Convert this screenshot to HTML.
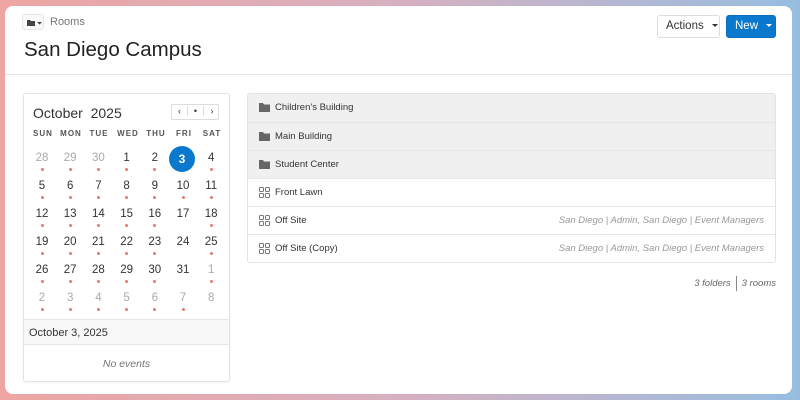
<!DOCTYPE html>
<html><head><style>
*{box-sizing:border-box;margin:0;padding:0}
body{width:800px;height:400px;overflow:hidden;background:linear-gradient(90deg,#eea5a3 0%,#d7b0c0 50%,#96bde0 100%);font-family:"Liberation Sans",sans-serif;color:#333;position:relative}
.panel{position:absolute;left:5px;top:6px;width:787px;height:388px;background:#fff;border-radius:8px;overflow:hidden}
.hdr{position:absolute;left:0;top:0;width:100%;height:69px;border-bottom:1px solid #e6e6e6}
.crumb{position:absolute;left:17px;top:8px;width:22px;height:16px;border:1px solid #e6e6e6;border-radius:3px;background:#f9f9f9}
.rooms{position:absolute;left:45px;top:10px;font-size:11px;color:#777}
h1{position:absolute;left:19px;top:32px;font-size:20.5px;font-weight:normal;color:#222}
.btn{position:absolute;top:9px;height:23px;border-radius:3px;font-size:11.5px;line-height:21px;padding-left:8px;white-space:nowrap}
.act{left:652px;width:63px;border:1px solid #ddd;color:#333}
.new{left:721px;width:50px;background:#0a78cc;color:#fff;border:1px solid #0a6fc0}
.caret{display:inline-block;width:0;height:0;border-left:3px solid transparent;border-right:3px solid transparent;border-top:3px solid currentColor;vertical-align:middle;margin-left:8px}
.cal{position:absolute;left:18px;top:87px;width:207px;height:289px;border:1px solid #e3e3e3;border-radius:3px;box-shadow:0 1px 2px rgba(0,0,0,.05)}
.mt{position:absolute;left:9px;top:11px;font-size:14px;color:#333}
.nav{position:absolute;left:147px;top:10px;width:48px;height:16px;border:1px solid #ddd;border-radius:2px;font-size:9px}
.nav span{position:absolute;top:1px;width:16px;text-align:center}
.dh{position:absolute;top:35px;font-size:8px;font-weight:bold;letter-spacing:1px;color:#555;width:30px;text-align:center}
.d{position:absolute;width:28px;text-align:center;font-size:11.5px;color:#333}
.d.o{color:#aaa}
.d i{position:absolute;left:12.5px;top:16px;width:3px;height:3px;border-radius:50%;background:#e07c74}
.sel{position:absolute;left:145px;top:52px;width:26px;height:26px;border-radius:50%;background:#0a78cc;color:#fff;font-weight:bold;font-size:12px;text-align:center;line-height:26px}
.sd{position:absolute;left:0;top:225px;width:100%;height:26px;background:#f8f8f8;border-top:1px solid #e6e6e6;border-bottom:1px solid #e6e6e6;font-size:11px;padding:7px 0 0 5px;color:#333}
.ne{position:absolute;top:264px;width:100%;text-align:center;font-size:10.5px;font-style:italic;color:#777}
.list{position:absolute;left:242px;top:87px;width:529px;border:1px solid #e3e3e3;border-radius:3px}
.row{height:28px;border-top:1px solid #e6e6e6;position:relative;font-size:9.5px;color:#333;line-height:27px;padding-left:27px}
.row:first-child{border-top:none}
.row.f{background:#f0f0f0}
.row .ic{position:absolute;left:11px;top:9px}
.row .r{position:absolute;right:11px;top:0;font-style:italic;color:#999;font-size:9.5px}
.foot{position:absolute;right:16px;top:270px;font-size:9.5px;font-style:italic;color:#666}
.foot b{display:inline-block;width:1px;height:15px;background:#888;vertical-align:middle;margin:0 5px}
</style></head><body>
<div class="panel">
<div class="hdr">
<div class="crumb"><svg width="22" height="16" style="position:absolute;left:-1px;top:-1px"><path d="M5 6h3l1 1h4v5H5z" fill="#444"/><path d="M15 8l2.5 2.5L20 8z" fill="#444"/></svg></div>
<div class="rooms">Rooms</div>
<h1>San Diego Campus</h1>
<div class="btn act">Actions<span class="caret"></span></div>
<div class="btn new">New<span class="caret"></span></div>
</div>
<div class="cal">
<div class="mt">October&nbsp; 2025</div>
<div class="nav"><span style="left:0;border-right:1px solid #ddd">&#8249;</span><span style="left:16px;border-right:1px solid #ddd">&bull;</span><span style="left:32px">&#8250;</span></div>
<div class="dh" style="left:4px">SUN</div><div class="dh" style="left:32px">MON</div><div class="dh" style="left:60px">TUE</div><div class="dh" style="left:89px">WED</div><div class="dh" style="left:117px">THU</div><div class="dh" style="left:145px">FRI</div><div class="dh" style="left:173px">SAT</div>
<div id="g"></div>
<div class="sel">3</div>
<div class="sd">October 3, 2025</div>
<div class="ne">No events</div>
</div>
<div class="list">
<div class="row f"><svg class="ic" width="11" height="9"><path d="M0 0h4l1 1.5h6V9H0z" fill="#666"/></svg>Children's Building</div>
<div class="row f"><svg class="ic" width="11" height="9"><path d="M0 0h4l1 1.5h6V9H0z" fill="#666"/></svg>Main Building</div>
<div class="row f"><svg class="ic" width="11" height="9"><path d="M0 0h4l1 1.5h6V9H0z" fill="#666"/></svg>Student Center</div>
<div class="row"><svg class="ic" width="11" height="11" style="top:8px"><g fill="none" stroke="#777" stroke-width="1"><rect x=".5" y=".5" width="4" height="4" rx="1"/><rect x="6.5" y=".5" width="4" height="4" rx="1"/><rect x=".5" y="6.5" width="4" height="4" rx="1"/><rect x="6.5" y="6.5" width="4" height="4" rx="1"/></g></svg>Front Lawn</div>
<div class="row"><svg class="ic" width="11" height="11" style="top:8px"><g fill="none" stroke="#777" stroke-width="1"><rect x=".5" y=".5" width="4" height="4" rx="1"/><rect x="6.5" y=".5" width="4" height="4" rx="1"/><rect x=".5" y="6.5" width="4" height="4" rx="1"/><rect x="6.5" y="6.5" width="4" height="4" rx="1"/></g></svg>Off Site<span class="r">San Diego | Admin, San Diego | Event Managers</span></div>
<div class="row"><svg class="ic" width="11" height="11" style="top:8px"><g fill="none" stroke="#777" stroke-width="1"><rect x=".5" y=".5" width="4" height="4" rx="1"/><rect x="6.5" y=".5" width="4" height="4" rx="1"/><rect x=".5" y="6.5" width="4" height="4" rx="1"/><rect x="6.5" y="6.5" width="4" height="4" rx="1"/></g></svg>Off Site (Copy)<span class="r">San Diego | Admin, San Diego | Event Managers</span></div>
</div>
<div class="foot">3 folders<b></b>3 rooms</div>
</div>
<script>
var days=[[28,29,30,1,2,3,4],[5,6,7,8,9,10,11],[12,13,14,15,16,17,18],[19,20,21,22,23,24,25],[26,27,28,29,30,31,1],[2,3,4,5,6,7,8]];
var nod={"2,5":1,"3,5":1,"4,5":1,"5,6":1,"0,5":1};
var h="";
for(var r=0;r<6;r++)for(var c=0;c<7;c++){
var v=days[r][c];var o=(r==0&&v>20)||(r>=4&&v<15);
if(r==0&&c==5)continue;
var cx=4+c*28.2;
h+='<div class="d'+(o?' o':'')+'" style="left:'+cx+'px;top:'+(58+r*28)+'px">'+v+(nod[r+","+c]?'':'<i></i>')+'</div>';}
document.getElementById("g").innerHTML=h;
</script>
</body></html>
